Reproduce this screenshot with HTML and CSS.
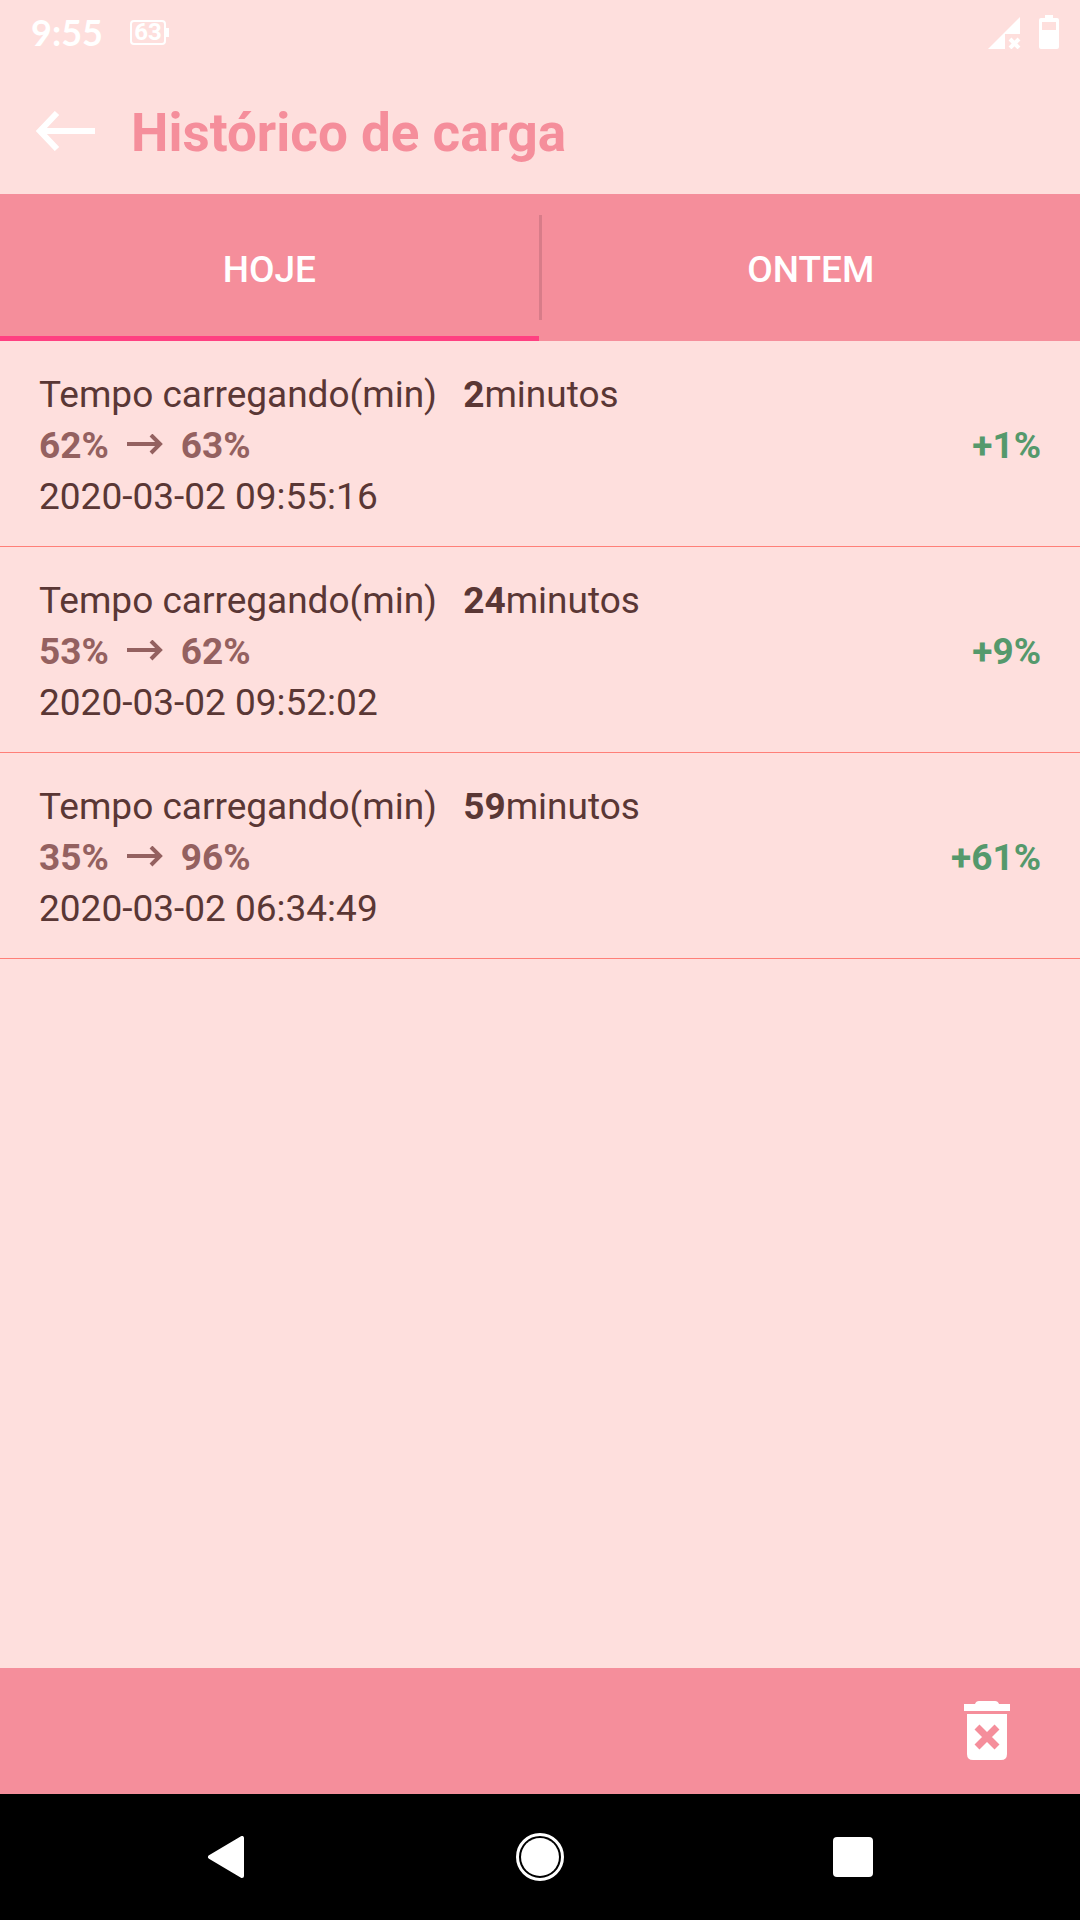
FILE: index.html
```
<!DOCTYPE html>
<html lang="pt-BR">
<head>
  <meta charset="UTF-8">
  <meta name="viewport" content="width=device-width, initial-scale=1.0">
  <title>Histórico de carga</title>
  <link rel="stylesheet" href="styles.css">
</head>
<body>
  <div class="status-bar">
    <span class="clock">9:55</span>
    <span class="level">63</span>
    <svg class="signal" width="33" height="33" viewBox="0 0 33 33" fill="#fff">
      <path d="M0 33 32 1V18H17V33Z"/>
      <path d="M22 23 31 32M31 23 22 32" stroke="#fff" stroke-width="4"/>
    </svg>
    <svg class="battery" width="20" height="34" viewBox="0 0 20 34" fill="#fff">
      <path fill-rule="evenodd" d="M6 0H14V3H18Q20 3 20 5V32Q20 34 18 34H2Q0 34 0 32V5Q0 3 2 3H6ZM3 7V15H17V7Z"/>
    </svg>
  </div>

  <header>
    <button class="back" type="button" aria-label="Voltar">
      <svg width="60" height="40" viewBox="0 0 60 40" fill="none" stroke="#fff" stroke-width="6">
        <path d="M21 2 4 20 21 38M4 20H59"/>
      </svg>
    </button>
    <h1>Histórico de carga</h1>
  </header>

  <nav class="tabs">
    <button class="tab active" type="button">HOJE</button>
    <span class="divider"></span>
    <button class="tab" type="button">ONTEM</button>
  </nav>

  <main>
    <ul class="history">
      <li>
        <p>Tempo carregando(min) <span class="time"><b>2</b>minutos</span></p>
        <p class="charge">
          <span>62%</span>
          <svg width="36" height="24" viewBox="0 0 36 24"><path d="M0 10H34M24 1 33 10 24 19"/></svg>
          <span>63%</span>
          <span class="gain">+1%</span>
        </p>
        <p>2020-03-02 09:55:16</p>
      </li>
      <li>
        <p>Tempo carregando(min) <span class="time"><b>24</b>minutos</span></p>
        <p class="charge">
          <span>53%</span>
          <svg width="36" height="24" viewBox="0 0 36 24"><path d="M0 10H34M24 1 33 10 24 19"/></svg>
          <span>62%</span>
          <span class="gain">+9%</span>
        </p>
        <p>2020-03-02 09:52:02</p>
      </li>
      <li>
        <p>Tempo carregando(min) <span class="time"><b>59</b>minutos</span></p>
        <p class="charge">
          <span>35%</span>
          <svg width="36" height="24" viewBox="0 0 36 24"><path d="M0 10H34M24 1 33 10 24 19"/></svg>
          <span>96%</span>
          <span class="gain">+61%</span>
        </p>
        <p>2020-03-02 06:34:49</p>
      </li>
    </ul>
  </main>

  <footer>
    <button type="button" aria-label="Apagar histórico">
      <svg width="48" height="60" viewBox="0 0 48 60" fill="#fff">
        <path d="M1 3H12Q13 0 16 0H32Q35 0 36 3H47V10H1Z"/>
        <path d="M4 13H44V53Q44 59 38 59H10Q4 59 4 53Z"/>
        <path d="M14 26 34 46M34 26 14 46" stroke="#f58e9b" stroke-width="7"/>
      </svg>
    </button>
  </footer>

  <div class="system-nav">
    <button type="button" aria-label="Anterior">
      <svg width="40" height="42" viewBox="0 0 40 42">
        <path d="M3 21 35 2V40Z" fill="#fff" stroke="#fff" stroke-width="4" stroke-linejoin="round"/>
      </svg>
    </button>
    <button type="button" aria-label="Início">
      <svg width="48" height="48" viewBox="0 0 48 48">
        <circle cx="24" cy="24" r="22.5" fill="none" stroke="#fff" stroke-width="3"/>
        <circle cx="24" cy="24" r="19" fill="#fff"/>
      </svg>
    </button>
    <button type="button" aria-label="Recentes">
      <svg width="40" height="40" viewBox="0 0 40 40">
        <rect width="40" height="40" rx="4" fill="#fff"/>
      </svg>
    </button>
  </div>

  <script>
    const tabs = document.querySelectorAll('.tab');

    tabs.forEach(tab => {
      tab.addEventListener('click', () => {
        tabs.forEach((item) => item.classList.remove('active'));
        tab.classList.add('active');
      });
    });
  </script>
</body>
</html>
```
FILE: styles.css
```
* {
  box-sizing: border-box;
}
body {
  display: flex;
  flex-direction: column;
  min-height: 100vh;
  margin: 0;
  background-color: #fedfdd;
  color: #5a3735;
  font-family: Roboto, sans-serif;
  font-size: 37px;
  line-height: 51px;
}
button {
  display: flex;
  align-items: center;
  justify-content: center;
  padding: 0;
  border: 0;
  background: none;
  color: inherit;
  font: inherit;
  cursor: pointer;
}
svg {
  display: block;
}
.status-bar {
  display: flex;
  align-items: center;
  height: 64px;
  padding: 0 21px 0 31px;
  color: #fff;
}
.clock {
  font-family: Lato, sans-serif;
  font-size: 36px;
  font-weight: bold;
}
.level {
  position: relative;
  width: 36px;
  margin-left: 27px;
  border: 2px solid #fff;
  border-radius: 4px;
  font-size: 24px;
  font-weight: bold;
  line-height: 21px;
  text-align: center;
}
.level::after {
  content: "";
  position: absolute;
  top: 6px;
  right: -5px;
  width: 3px;
  height: 9px;
  background-color: #fff;
}
.signal {
  margin-left: auto;
  margin-right: 18px;
}
header {
  display: flex;
  align-items: center;
  height: 130px;
  padding: 4px 36px 0;
}
.back {
  margin-right: 35px;
}
h1 {
  margin: 0;
  padding-top: 4px;
  color: #f58e9b;
  font-size: 53px;
  font-weight: bold;
}
.tabs {
  display: grid;
  grid-template-columns: 1fr 3px 1fr;
  height: 147px;
  background-color: #f58e9b;
  color: #fff;
  font-weight: 500;
}
.tab {
  padding-top: 8px;
  border-bottom: 5px solid transparent;
}
.tab.active {
  border-color: #ff4081;
}
.divider {
  margin: 21px 0;
  background-color: #d87c89;
}
main {
  flex: 1;
}
.history {
  margin: 0;
  padding: 0;
  list-style: none;
}
.history li {
  padding: 28px 39px 24px;
  border-bottom: 1px solid #ff7f78;
}
.history p {
  margin: 0;
}
.time {
  margin-left: 17px;
}
.history .charge {
  display: flex;
  align-items: center;
  gap: 18px;
  color: #946160;
  font-weight: bold;
}
.charge svg {
  fill: none;
  stroke: #946160;
  stroke-width: 4;
}
.charge .gain {
  margin-left: auto;
  color: #55996c;
}
footer {
  display: flex;
  align-items: center;
  justify-content: flex-end;
  height: 126px;
  padding-right: 69px;
  background-color: #f58e9b;
}
.system-nav {
  display: grid;
  grid-template-columns: repeat(3, 1fr);
  height: 126px;
  padding: 0 70px;
  background-color: #000;
}
```
